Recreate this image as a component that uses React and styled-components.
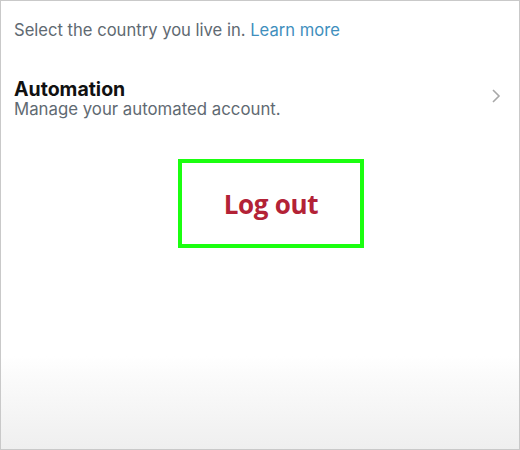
import styled, { createGlobalStyle } from "styled-components";

const GlobalStyle = createGlobalStyle`
  html, body {
    margin: 0;
    padding: 0;
    background: #fff;
  }
`;

const Frame = styled.div`
  box-sizing: border-box;
  width: 520px;
  height: 450px;
  border: 1px solid #c9c9c9;
  background: linear-gradient(to bottom, #fff 0, #fff 355px, #fafafa 380px, #efefef 448px);
  font-family: Inter, "Noto Sans", sans-serif;
  display: flex;
  flex-direction: column;
  padding: 17px 0 0 13px;
  overflow: hidden;
`;

const Note = styled.p`
  margin: 0;
  font-size: 16.6px;
  line-height: 24px;
  color: #5f6a72;
`;

const Link = styled.a`
  color: #3f8fbd;
  text-decoration: none;
`;

const Row = styled.div`
  display: flex;
  align-items: center;
  justify-content: space-between;
  margin-top: 37px;
  padding-right: 18px;
`;

const RowText = styled.div`
  display: flex;
  flex-direction: column;
`;

const Title = styled.span`
  font-size: 19.5px;
  line-height: 20px;
  font-weight: 700;
  color: #111;
`;

const Sub = styled.span`
  font-size: 16.8px;
  line-height: 20px;
  color: #5f6a72;
`;

const Chevron = styled.svg`
  width: 10px;
  height: 16px;
  margin-top: -6px;
`;

const LogoutBox = styled.div`
  align-self: center;
  box-sizing: border-box;
  width: 186px;
  height: 89px;
  margin-top: 40px;
  margin-left: 9px;
  border: 4px solid #1bff10;
  display: flex;
  align-items: center;
  justify-content: center;
`;

const LogoutText = styled.span`
  font-family: "Open Sans", sans-serif;
  font-weight: 700;
  font-size: 26px;
  color: #b32236;
  letter-spacing: -0.3px;
`;

export default function App() {
  return (
    <>
      <GlobalStyle />
      <Frame>
        <Note>
          Select the country you live in. <Link>Learn more</Link>
        </Note>
        <Row>
          <RowText>
            <Title>Automation</Title>
            <Sub>Manage your automated account.</Sub>
          </RowText>
          <Chevron viewBox="0 0 10 16">
            <path d="M2 2 L8 8 L2 14" fill="none" stroke="#a8a8a8" strokeWidth="1.6" />
          </Chevron>
        </Row>
        <LogoutBox>
          <LogoutText>Log out</LogoutText>
        </LogoutBox>
      </Frame>
    </>
  );
}
